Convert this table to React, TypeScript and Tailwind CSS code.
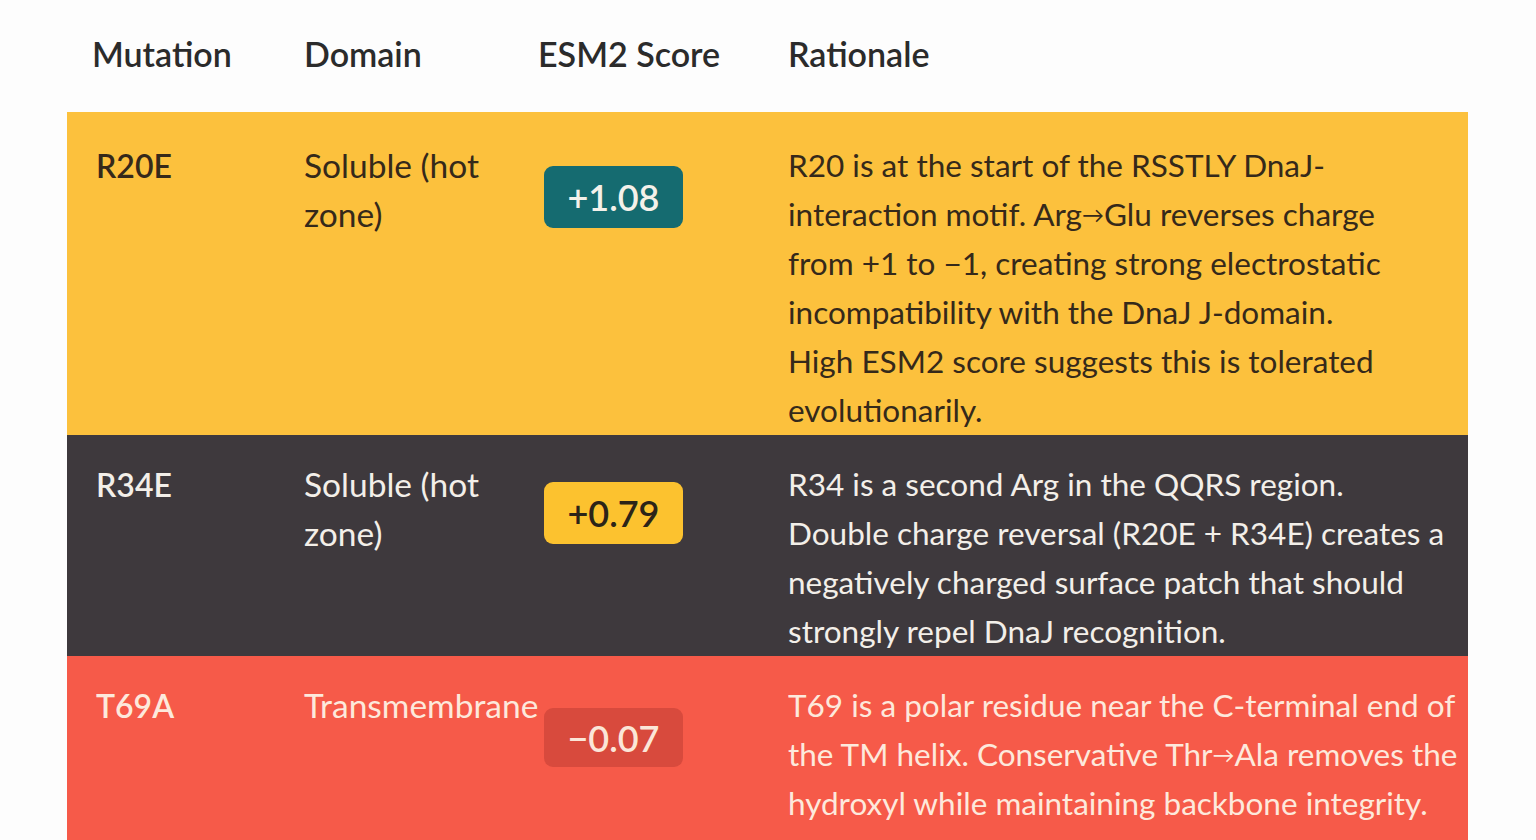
import { Fragment } from 'react';

const Arrow = () => <span className="text-[22px] align-[3px]">→</span>;

const rows = [
  {
    mutation: 'R20E',
    domain: ['Soluble (hot', 'zone)'],
    score: '+1.08',
    lines: [
      <>R20 is at the start of the RSSTLY DnaJ-</>,
      <>interaction motif. Arg<Arrow />Glu reverses charge</>,
      <>from +1 to −1, creating strong electrostatic</>,
      <>incompatibility with the DnaJ J-domain.</>,
      <>High ESM2 score suggests this is tolerated</>,
      <>evolutionarily.</>,
    ],
    rowClass: 'bg-[#fcc13d] text-[#35291a] pt-[29px]',
    badgeClass: 'bg-[#156b70] text-[#f4f1ea] mt-[25px] h-[62px]',
  },
  {
    mutation: 'R34E',
    domain: ['Soluble (hot', 'zone)'],
    score: '+0.79',
    lines: [
      <>R34 is a second Arg in the QQRS region.</>,
      <>Double charge reversal (R20E + R34E) creates a</>,
      <>negatively charged surface patch that should</>,
      <>strongly repel DnaJ recognition.</>,
    ],
    rowClass: 'bg-[#3e393d] text-[#f3efe9] pt-[25px]',
    badgeClass: 'bg-[#fcc22f] text-[#2c2418] mt-[22px] h-[62px]',
  },
  {
    mutation: 'T69A',
    domain: ['Transmembrane'],
    score: '−0.07',
    lines: [
      <>T69 is a polar residue near the C-terminal end of</>,
      <>the TM helix. Conservative Thr<Arrow />Ala removes the</>,
      <>hydroxyl while maintaining backbone integrity.</>,
    ],
    rowClass: 'bg-[#f65a49] text-[#fde9dc] pt-[25px] min-h-[200px]',
    badgeClass: 'bg-[#d84a3d] text-[#fbe6d8] mt-[27px] h-[59px]',
  },
];

export default function App() {
  return (
    <div className="h-screen bg-[#fdfdfd] font-['Lato','Noto_Sans',sans-serif] overflow-hidden">
      <div className="ml-[67px] w-[1401px]">
        {/* header */}
        <div className="grid grid-cols-[209px_240px_244px_708px] h-[112px] items-center text-[34px] font-semibold text-[#2b2b2b]">
          <div className="pl-[25px] pb-[6px]">Mutation</div>
          <div className="pl-[28px] pb-[6px]">Domain</div>
          <div className="pl-[22px] pb-[6px]">ESM2 Score</div>
          <div className="pl-[28px] pb-[6px]">Rationale</div>
        </div>

        {rows.map((r) => (
          <div key={r.mutation} className={`grid grid-cols-[209px_240px_244px_708px] ${r.rowClass}`}>
            <div className="pl-[29px] text-[32px] leading-[49px] font-semibold">{r.mutation}</div>
            <div className="pl-[28px] text-[33.5px] leading-[49px] whitespace-nowrap">
              {r.domain.map((d) => (
                <div key={d}>{d}</div>
              ))}
            </div>
            <div className="pl-[28px]">
              <div
                className={`w-[139px] rounded-[9px] flex items-center justify-center text-[36px] font-semibold ${r.badgeClass}`}
              >
                {r.score}
              </div>
            </div>
            <div className="pl-[28px] text-[31.5px] leading-[49px] whitespace-nowrap">
              {r.lines.map((l, i) => (
                <Fragment key={i}>
                  <div>{l}</div>
                </Fragment>
              ))}
            </div>
          </div>
        ))}
      </div>
    </div>
  );
}
